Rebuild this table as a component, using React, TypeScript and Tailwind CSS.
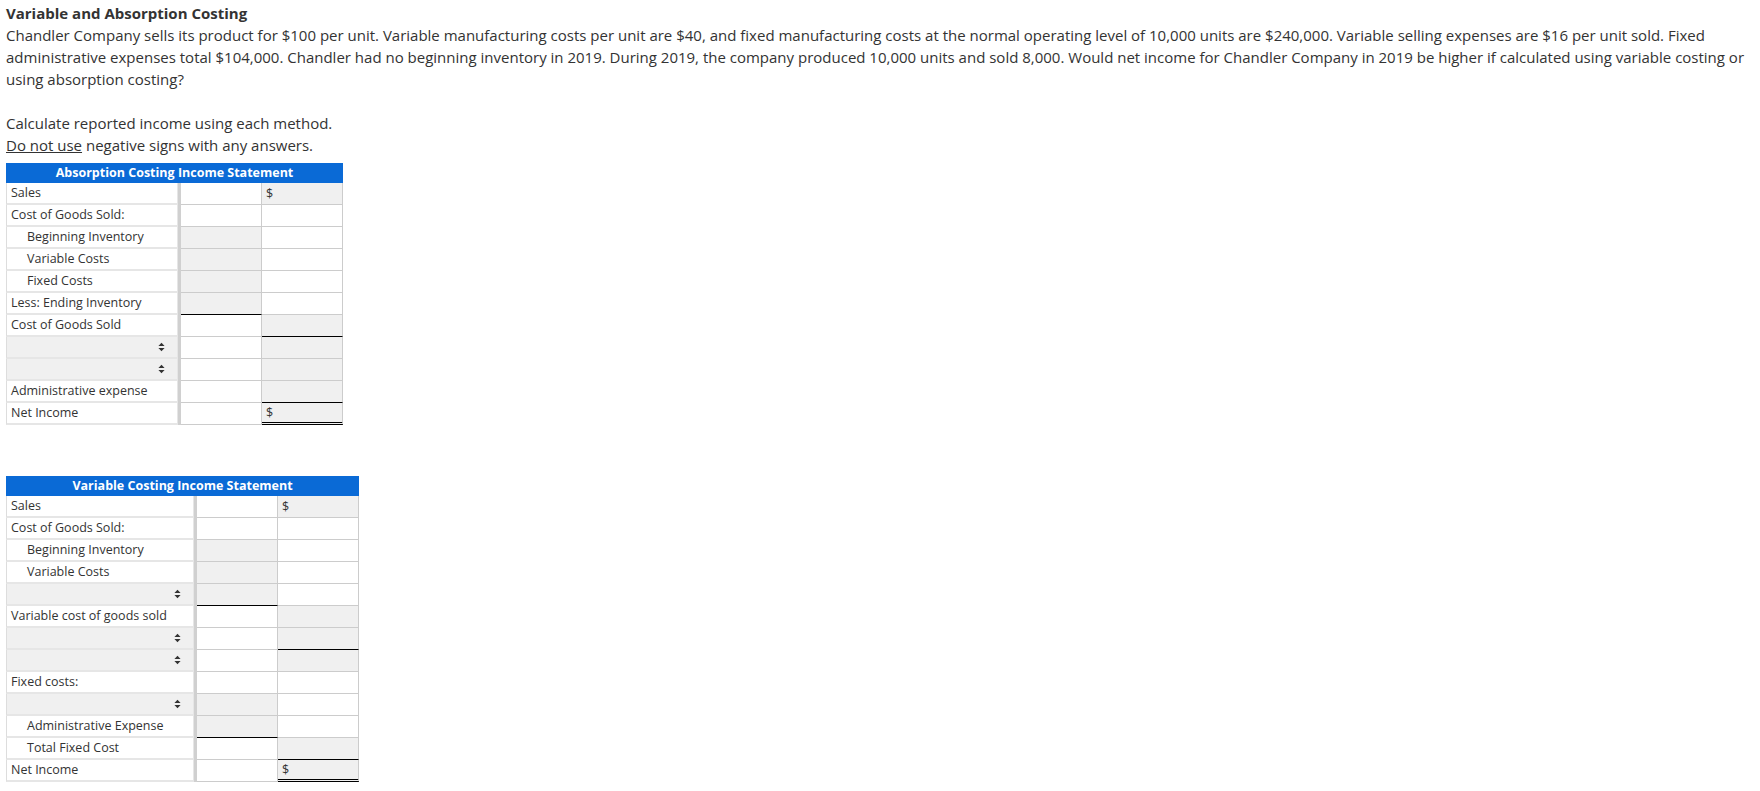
import React from 'react';

type Fill = 'w' | 'g';

type Row = {
  label?: string;
  indent?: boolean;
  select?: boolean;
  a: Fill;
  b: Fill;
  aLine?: boolean;
  bLine?: 'single' | 'double';
  bText?: string;
};

const absorptionRows: Row[] = [
  { label: 'Sales', a: 'w', b: 'g', bText: '$' },
  { label: 'Cost of Goods Sold:', a: 'w', b: 'w' },
  { label: 'Beginning Inventory', indent: true, a: 'g', b: 'w' },
  { label: 'Variable Costs', indent: true, a: 'g', b: 'w' },
  { label: 'Fixed Costs', indent: true, a: 'g', b: 'w' },
  { label: 'Less: Ending Inventory', a: 'g', b: 'w', aLine: true },
  { label: 'Cost of Goods Sold', a: 'w', b: 'g', bLine: 'single' },
  { select: true, a: 'w', b: 'g' },
  { select: true, a: 'w', b: 'g' },
  { label: 'Administrative expense', a: 'w', b: 'g', bLine: 'single' },
  { label: 'Net Income', a: 'w', b: 'g', bText: '$', bLine: 'double' },
];

const variableRows: Row[] = [
  { label: 'Sales', a: 'w', b: 'g', bText: '$' },
  { label: 'Cost of Goods Sold:', a: 'w', b: 'w' },
  { label: 'Beginning Inventory', indent: true, a: 'g', b: 'w' },
  { label: 'Variable Costs', indent: true, a: 'g', b: 'w' },
  { select: true, a: 'g', b: 'w', aLine: true },
  { label: 'Variable cost of goods sold', a: 'w', b: 'g' },
  { select: true, a: 'w', b: 'g', bLine: 'single' },
  { select: true, a: 'w', b: 'g' },
  { label: 'Fixed costs:', a: 'w', b: 'w' },
  { select: true, a: 'g', b: 'w' },
  { label: 'Administrative Expense', indent: true, a: 'g', b: 'w', aLine: true },
  { label: 'Total Fixed Cost', indent: true, a: 'w', b: 'g', bLine: 'single' },
  { label: 'Net Income', a: 'w', b: 'g', bText: '$', bLine: 'double' },
];

function SortArrows() {
  return (
    <svg width="7" height="10" viewBox="0 0 7 10" className="shrink-0">
      <path d="M0.4 4.1 L3.5 0.7 L6.6 4.1 Z M0.4 5.9 L3.5 9.3 L6.6 5.9 Z" fill="#333333" />
    </svg>
  );
}

function Statement({ title, labelW, width, rows }: { title: string; labelW: string; width: string; rows: Row[] }) {
  return (
    <div className={`${width} flex flex-col text-[12.5px] text-[#333333]`}>
      <div className="flex h-[20px] items-center justify-center bg-[#0a6ad6] font-bold text-white">{title}</div>
      {rows.map((r, i) => (
        <div key={i} className="flex h-[22px]">
          {/* label column */}
          <div
            className={`${labelW} flex items-center border-b-2 border-l border-r border-b-[#e6e6e6] border-l-[#dddddd] border-r-[#e6e6e6] whitespace-nowrap ${
              r.select ? 'justify-end bg-[#f0f0f0] pr-[12px]' : 'bg-white'
            } ${r.indent ? 'pl-[20px]' : 'pl-[4px]'}`}
          >
            {r.select ? <SortArrows /> : r.label}
          </div>
          <div className="w-[3px] bg-[#d0d0d0]" />
          <div
            className={`w-[81px] border-b border-r border-r-[#cccccc] ${r.aLine ? 'border-b-black' : 'border-b-[#cccccc]'} ${
              r.a === 'g' ? 'bg-[#f0f0f0]' : 'bg-white'
            }`}
          />
          <div
            className={`flex w-[81px] items-center border-r border-r-[#cccccc] pl-[4px] ${
              r.bLine === 'double'
                ? 'border-b-[3px] border-double border-b-black'
                : r.bLine === 'single'
                ? 'border-b border-b-black'
                : 'border-b border-b-[#cccccc]'
            } ${r.b === 'g' ? 'bg-[#f0f0f0]' : 'bg-white'}`}
          >
            {r.bText}
          </div>
        </div>
      ))}
    </div>
  );
}

export default function App() {
  return (
    <div className="min-h-screen bg-white px-[6px] pt-[2px] font-['Open_Sans',sans-serif] text-[15px] leading-[22px] text-[#333333]">
      <div className="font-bold">Variable and Absorption Costing</div>
      <p>
        Chandler Company sells its product for $100 per unit. Variable manufacturing costs per unit are $40, and fixed
        manufacturing costs at the normal operating level of 10,000 units are $240,000. Variable selling expenses are $16
        per unit sold. Fixed administrative expenses total $104,000. Chandler had no beginning inventory in 2019. During
        2019, the company produced 10,000 units and sold 8,000. Would net income for Chandler Company in 2019 be higher if
        calculated using variable costing or using absorption costing?
      </p>
      <p className="mt-[22px]">Calculate reported income using each method.</p>
      <p>
        <span className="underline">Do not use</span> negative signs with any answers.
      </p>

      <div className="mt-[7px]">
        <Statement title="Absorption Costing Income Statement" labelW="w-[172px]" width="w-[337px]" rows={absorptionRows} />
      </div>

      <div className="mt-[51px]">
        <Statement title="Variable Costing Income Statement" labelW="w-[188px]" width="w-[353px]" rows={variableRows} />
      </div>
    </div>
  );
}
